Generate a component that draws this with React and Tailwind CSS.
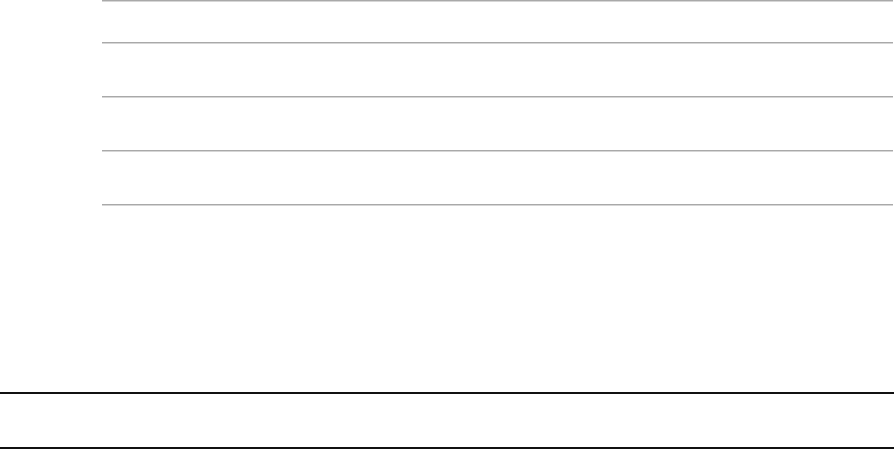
import React from 'react';

function Rule() {
  return <div className="h-0 border-t border-b border-t-[#a9a9a9] border-b-[#d6d6d6]" />;
}

export default function App() {
  return (
    <div className="w-[894px] h-[449px] bg-white overflow-hidden flex flex-col">
      {/* list rows */}
      <div className="ml-[102px] mr-[1px] flex flex-col">
        <Rule />
        <div className="h-[40px]" />
        <Rule />
        <div className="h-[52px]" />
        <Rule />
        <div className="h-[52px]" />
        <Rule />
        <div className="h-[52px]" />
        <Rule />
      </div>
      <div className="h-[186px]" />
      {/* footer bars */}
      <div className="h-[2px] bg-[#111]" />
      <div className="h-[53px]" />
      <div className="h-[2px] bg-[#111]" />
    </div>
  );
}
